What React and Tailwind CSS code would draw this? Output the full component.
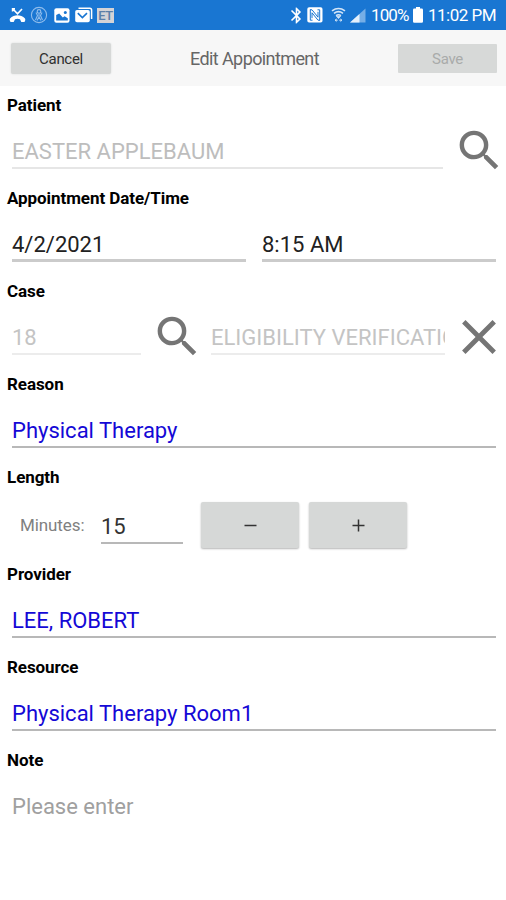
import React, { useState } from 'react';
import { MdSearch, MdClose, MdBluetooth } from 'react-icons/md';

// Android style status bar
const StatusBar = () => (
  <div className="flex h-[30px] items-center bg-[#1976d2] pl-[9px] text-white shadow-[0_1px_0_#a9cdf0]">
    <svg width="17" height="16" viewBox="0 0 17 16" className="shrink-0">
      <path d="M4 2 L8.5 6.8 L13 2M3.6 4.500V1.800H6" fill="none" stroke="currentColor" strokeWidth="1.6" />
      <path d="M8.500 8.300C11 8.300 14 9.500 16 11.500Q17 12.500 15.500 15H12.300L11 12.300Q8.500 11.300 6 12.300L4.700 15H1.500Q0 12.500 1 11.500C3 9.500 6 8.300 8.500 8.300z" fill="currentColor" />
    </svg>
    <svg width="18" height="18" viewBox="0 0 18 18" className="ml-[4px] shrink-0 text-[#8ebcec]">
      <circle cx="9" cy="9" r="7.6" fill="none" stroke="currentColor" strokeWidth="1.1" />
      <circle cx="9" cy="5.4" r="1.8" fill="none" stroke="currentColor" strokeWidth="1.2" />
      <path d="M9 7.500v3.500M6 6.500 7.500 9.500 5.500 14M12 6.500 10.500 9.500 12.500 14M9 11l-2 3.500M9 11l2 3.500" fill="none" stroke="currentColor" strokeWidth="1.1" />
    </svg>
    <svg width="16" height="15" viewBox="0 0 16 15" className="ml-[6px] shrink-0">
      <rect x=".3" y=".3" width="15.2" height="14.4" rx="2" fill="currentColor" />
      <path d="M2.200 7v5.500h11.600V10.200L10.600 8.200 8.800 9.400 5.200 5.500z" fill="#1976d2" />
      <circle cx="11.300" cy="4.600" r="1.500" fill="#1976d2" />
    </svg>
    <svg width="18" height="16" viewBox="0 0 18 16" className="ml-[5px] shrink-0">
      <path d="M3.500 1.200h11.300q1.800 0 1.800 1.800v9" fill="none" stroke="currentColor" strokeWidth="1.500" />
      <rect x=".2" y="3" width="14.600" height="12.300" rx="1.800" fill="currentColor" />
      <path d="M2.800 6.200 7.400 10.600 12 6.200" fill="none" stroke="#1976d2" strokeWidth="1.600" />
    </svg>
    <span className="ml-[4px] flex h-[15px] w-[17px] items-center justify-center bg-[#d3d3d6] text-[13px] leading-none font-medium tracking-[-0.5px] text-[#5c7fa8]">
      ET
    </span>

    <div className="ml-auto flex items-center pr-[9px]">
      <MdBluetooth className="h-[19px] w-[19px]" />
      <svg width="16" height="16" viewBox="0 0 16 16" className="ml-px">
        <rect x=".3" y=".3" width="15.200" height="15.200" rx="1.800" fill="currentColor" />
        <path d="M3 2.800H5L11 10.200V4.800M13 13.200H11L5 5.800v5.400M3.300 2.500v10.700H5.500M12.700 13.500V2.800H10.500" fill="none" stroke="#1976d2" strokeWidth="1" />
      </svg>
      <svg width="15" height="16" viewBox="0 0 15 16" className="ml-[8px] text-[#d5e6f8]">
        <path d="M1 3.800Q7.500-.8 14 3.800M3 6.300Q7.500 3 12 6.300M5 8.600Q7.500 6.800 10 8.600" fill="none" stroke="currentColor" strokeWidth="1.600" />
        <path d="M5.400 9.200h4.200L7.500 11.600zM4 13.200h3M8 13.200h3M5.500 11.800 4 13.200l1.500 1.400M9.500 11.800l1.500 1.400-1.500 1.400" fill="currentColor" stroke="currentColor" strokeWidth=".7" />
      </svg>
      <svg width="16" height="15" viewBox="0 0 16 15" className="ml-[4px]">
        <path d="M0 14.500 15.500.5v14z" fill="#75aee6" />
        <path d="M0 14.500 9.500 6v8.500z" fill="#e4f0fc" />
      </svg>
      <span className="ml-[5px] w-[39px] pt-px text-[17px] leading-none tracking-[-0.9px] whitespace-nowrap">100%</span>
      <svg width="10" height="16" viewBox="0 0 10 16" className="ml-[3px]">
        <path d="M3 0h4v1.600h1.700Q10 1.600 10 3v11.400q0 1.400-1.300 1.400H1.300Q0 15.800 0 14.400V3q0-1.400 1.300-1.400H3z" fill="currentColor" />
      </svg>
      <span className="ml-[5px] w-[69px] pt-px text-[17px] leading-none tracking-[-0.5px] whitespace-nowrap">11:02 PM</span>
    </div>
  </div>
);

const Section = ({ label, className = 'h-[93px]', children }) => (
  <section className={className}>
    <h2 className="h-[38px] pl-[7px] text-[17px] leading-[38px] font-bold tracking-[-0.07px] text-black">{label}</h2>
    <div className="flex items-start pl-[12px]">{children}</div>
  </section>
);

const Field = ({ value, className }) => (
  <div className={`h-[45px] shrink-0 overflow-hidden text-[22px] leading-[55px] whitespace-nowrap ${className}`}>{value}</div>
);

const IconButton = ({ label, className, children }) => (
  <button type="button" aria-label={label} className={`shrink-0 text-[#757575] ${className}`}>
    {children}
  </button>
);

const App = () => {
  const [minutes, setMinutes] = useState(15);

  return (
    <div className="h-[900px] w-[506px] overflow-hidden bg-white font-[Roboto,sans-serif]">
      <StatusBar />

      {/* Header */}
      <header className="flex h-[56px] items-center justify-between bg-[#f7f7f7] pt-[1px] pr-[9px] pl-[11px]">
        <button type="button" className="h-[31px] w-[100px] rounded-[2px] bg-[#d6d8d7] pt-[2px] text-[15px] tracking-[-0.3px] text-[#303030] shadow-[0_0_2px_#d6d8d7]">
          Cancel
        </button>
        <h1 className="text-[18px] tracking-[-0.6px] text-[#666]">Edit Appointment</h1>
        <button type="button" disabled className="h-[29px] w-[99px] rounded-[1px] bg-[#d7d9d8] pt-[2px] text-[15px] tracking-[-0.3px] text-[#a9abaa]">
          Save
        </button>
      </header>

      {/* Appointment form */}
      <main>
        <Section label="Patient">
          <Field value="EASTER APPLEBAUM" className="w-[431px] border-b-2 border-[#e6e6e6] text-[#bdbdbd]" />
          <IconButton label="Find patient" className="ml-[10px]">
            <MdSearch className="h-[53px] w-[53px]" />
          </IconButton>
        </Section>

        <Section label="Appointment Date/Time">
          <Field value="4/2/2021" className="w-[234px] border-b-3 border-[#cbcbcb] text-[#212121]" />
          <Field value="8:15 AM" className="ml-[16px] w-[234px] border-b-3 border-[#cbcbcb] text-[#212121]" />
        </Section>

        <Section label="Case">
          <Field value="18" className="w-[129px] border-b-2 border-[#ececec] text-[#c4c4c4]" />
          <IconButton label="Find case" className="ml-[10px]">
            <MdSearch className="h-[53px] w-[53px]" />
          </IconButton>
          <Field value="ELIGIBILITY VERIFICATION" className="ml-[7px] w-[234px] border-b-2 border-[#ececec] text-[#c4c4c4]" />
          <IconButton label="Clear case" className="-mt-[2px] ml-[5px]">
            <MdClose className="h-[58px] w-[58px]" />
          </IconButton>
        </Section>

        <Section label="Reason">
          <Field value="Physical Therapy" className="w-[484px] border-b-2 border-[#b8b8b8] text-[#1408d6]" />
        </Section>

        <Section label="Length" className="h-[97px]">
          <span className="w-[81px] pl-[8px] text-[17px] leading-[59px] tracking-[-0.1px] text-[#808080]">Minutes:</span>
          <Field value={minutes} className="mt-[3px] ml-[8px] w-[82px] border-b-2 border-[#b8b8b8] leading-[54px] text-[#333]" />
          <button
            type="button"
            aria-label="Decrease minutes"
            onClick={() => setMinutes(Math.max(0, minutes - 15))}
            className="mt-[6px] ml-[18px] flex h-[46px] w-[98px] items-center justify-center rounded-[2px] bg-[#d6d8d7] text-[#333] shadow-[0_1px_2px_#b5b5b5]"
          >
            <svg width="13" height="13" viewBox="0 0 13 13">
              <path d="M.5 6.500h12" stroke="currentColor" strokeWidth="1.500" />
            </svg>
          </button>
          <button
            type="button"
            aria-label="Increase minutes"
            onClick={() => setMinutes(minutes + 15)}
            className="mt-[6px] ml-[10px] flex h-[46px] w-[98px] items-center justify-center rounded-[2px] bg-[#d6d8d7] text-[#333] shadow-[0_1px_2px_#b5b5b5]"
          >
            <svg width="13" height="13" viewBox="0 0 13 13">
              <path d="M.5 6.500h12M6.500 .5v12" stroke="currentColor" strokeWidth="1.500" />
            </svg>
          </button>
        </Section>

        <Section label="Provider">
          <Field value="LEE, ROBERT" className="w-[484px] border-b-2 border-[#b8b8b8] text-[#1408d6]" />
        </Section>

        <Section label="Resource">
          <Field value="Physical Therapy Room1" className="w-[484px] border-b-2 border-[#b8b8b8] text-[#1408d6]" />
        </Section>

        <Section label="Note">
          <Field value="Please enter" className="w-[484px] text-[#a0a0a0]" />
        </Section>
      </main>
    </div>
  );
};

export default App;
